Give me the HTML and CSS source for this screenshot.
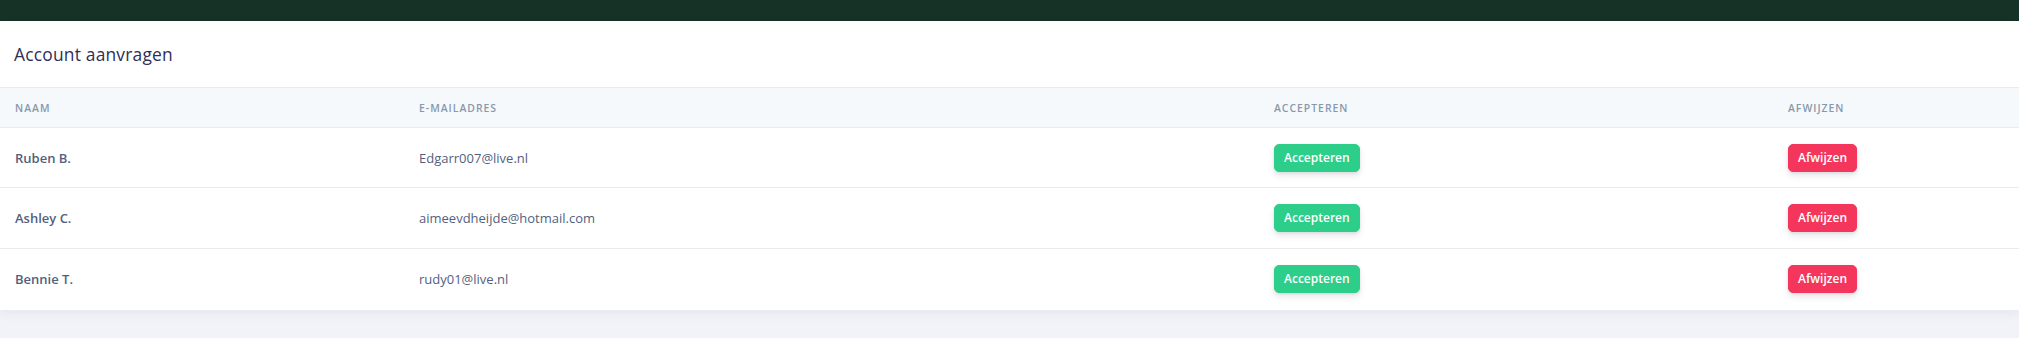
FILE: index.html
```html
<!DOCTYPE html>
<html lang="nl">
<head>
  <meta charset="UTF-8" />
  <meta name="viewport" content="width=device-width, initial-scale=1.0" />
  <title>Account aanvragen</title>
  <link rel="stylesheet" href="styles.css">
</head>
<body>
  <div class="topbar"></div>

  <div class="card">
    <div class="card-header">
      <h3>Account aanvragen</h3>
    </div>

    <table class="requests">
      <colgroup>
        <col class="col-name">
        <col class="col-mail">
        <col class="col-accept">
        <col>
      </colgroup>
      <thead>
        <tr>
          <th>Naam</th>
          <th>E-mailadres</th>
          <th>Accepteren</th>
          <th>Afwijzen</th>
        </tr>
      </thead>
      <tbody>
        <tr>
          <td class="name">Ruben B.</td>
          <td>Edgarr007@live.nl</td>
          <td><button class="btn btn-success">Accepteren</button></td>
          <td><button class="btn btn-danger">Afwijzen</button></td>
        </tr>
        <tr>
          <td class="name">Ashley C.</td>
          <td>aimeevdheijde@hotmail.com</td>
          <td><button class="btn btn-success">Accepteren</button></td>
          <td><button class="btn btn-danger">Afwijzen</button></td>
        </tr>
        <tr>
          <td class="name">Bennie T.</td>
          <td>rudy01@live.nl</td>
          <td><button class="btn btn-success">Accepteren</button></td>
          <td><button class="btn btn-danger">Afwijzen</button></td>
        </tr>
      </tbody>
    </table>
  </div>
</body>
</html>
```

FILE: styles.css
```css
:root {
  --dark: #163126;
  --heading: #2f2f5a;
  --text: #525f7f;
  --muted: #8898aa;
  --border: #e9ecef;
  --head-bg: #f6f9fc;
  --page-bg: #f2f3f8;
  --success: #2dce89;
  --danger: #f5365c;
}

* {
  box-sizing: border-box;
}

body {
  margin: 0;
  font-family: 'Open Sans', sans-serif;
  background-color: var(--page-bg);
  color: var(--text);
  height: 338px;
  overflow: hidden;
}

.topbar {
  height: 21px;
  background-color: var(--dark);
}

.card {
  background-color: #fff;
  box-shadow: 0 4px 10px rgba(50, 50, 93, 0.06);
}

.card-header {
  height: 66px;
  display: flex;
  align-items: center;
  padding: 0 14px;
}

.card-header h3 {
  margin: 0;
  font-size: 17.4px;
  font-weight: 500;
  letter-spacing: 0.2px;
  color: var(--heading);
}

.requests {
  width: 100%;
  border-collapse: collapse;
  table-layout: fixed;
}

.col-name { width: 404px; }
.col-mail { width: 855px; }
.col-accept { width: 514px; }

.requests th {
  height: 40px;
  padding: 0 15px;
  text-align: left;
  font-size: 10.4px;
  font-weight: 600;
  letter-spacing: 1px;
  text-transform: uppercase;
  color: var(--muted);
  background-color: var(--head-bg);
  border-top: 1px solid var(--border);
  border-bottom: 1px solid var(--border);
}

.requests td {
  height: 61px;
  padding: 0 15px;
  font-size: 13px;
  color: var(--text);
  border-top: 1px solid var(--border);
}

.requests tbody tr:first-child td {
  border-top: none;
  height: 60px;
}

.requests td.name {
  font-weight: 600;
}

.btn {
  font-family: 'Open Sans', sans-serif;
  font-size: 12px;
  font-weight: 600;
  line-height: 18px;
  padding: 4px 9px;
  border: 1px solid transparent;
  border-radius: 5px;
  color: #fff;
  cursor: pointer;
  box-shadow: 0 4px 6px rgba(50, 50, 93, 0.11), 0 1px 3px rgba(0, 0, 0, 0.08);
}

.btn-success {
  background-color: var(--success);
  border-color: var(--success);
}

.btn-danger {
  background-color: var(--danger);
  border-color: var(--danger);
}
```
